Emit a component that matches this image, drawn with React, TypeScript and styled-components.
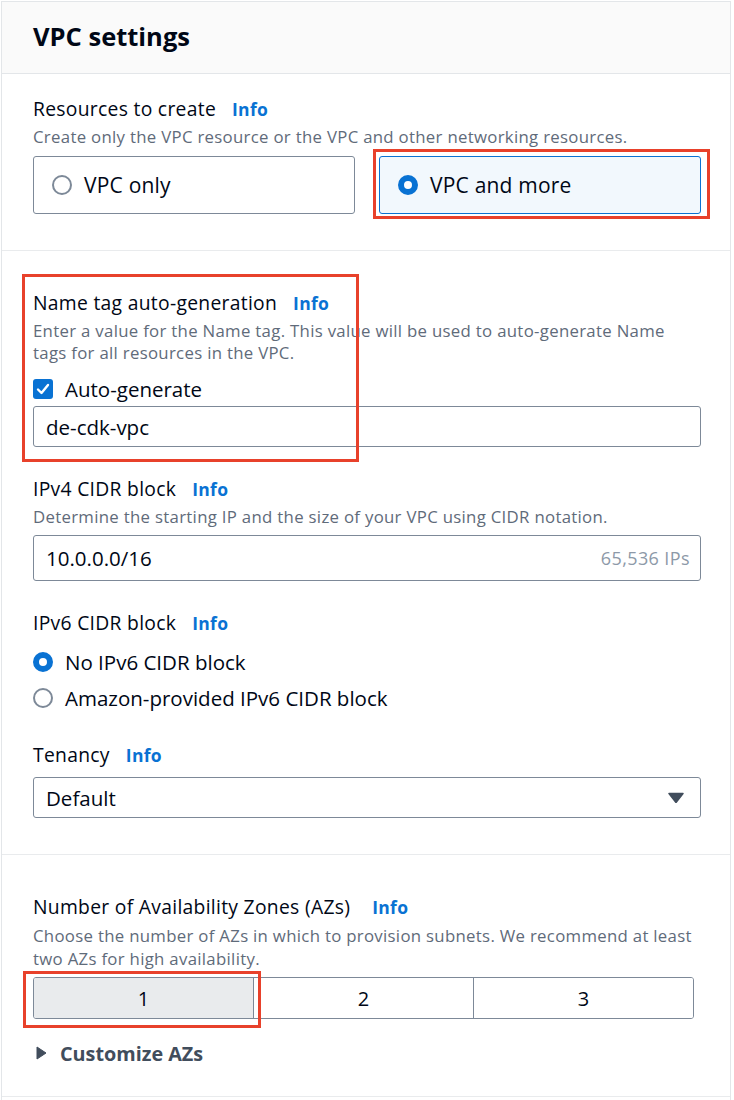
import React from "react";
import styled, { createGlobalStyle } from "styled-components";

const GlobalStyle = createGlobalStyle`
  html, body { margin: 0; padding: 0; background: #ffffff; }
  body { font-family: "Open Sans", "Liberation Sans", Arial, sans-serif; color: #000716; }
  * { box-sizing: border-box; }
`;

const Page = styled.div`
  position: relative;
  width: 734px;
  height: 1100px;
  overflow: hidden;
  padding: 1px 3px 0 1px;
`;

const Container = styled.div`
  border: 1px solid #e3e6e9;
  border-bottom: none;
  height: 1120px;
  background: #ffffff;
`;

const Header = styled.div`
  height: 72px;
  background: #fafafa;
  border-bottom: 1px solid #e3e6e9;
  padding: 0 0 4px 31px;
  display: flex;
  align-items: center;
`;

const Title = styled.h2`
  margin: 0;
  font-size: 25.5px;
  font-weight: 700;
  color: #000716;
`;

const Section = styled.div<{ $top: number; $bottom: number }>`
  padding: ${(p) => p.$top}px 29px ${(p) => p.$bottom}px 31px;
  border-bottom: 1px solid #e9ebed;
  display: flex;
  flex-direction: column;
`;

const LabelRow = styled.div<{ $mt?: number }>`
  display: flex;
  align-items: baseline;
  height: 24px;
  line-height: 24px;
  margin-top: ${(p) => p.$mt ?? 0}px;
  white-space: nowrap;
`;

const Label = styled.span`
  font-size: 19.3px;
  letter-spacing: 0.3px;
  color: #000716;
`;

const Info = styled.a<{ $gap?: number }>`
  margin-left: ${(p) => p.$gap ?? 16}px;
  font-size: 17.5px;
  font-weight: 700;
  letter-spacing: 0.3px;
  color: #0972d3;
  text-decoration: none;
`;

const Desc = styled.div<{ $mt?: number; $lh?: number }>`
  margin-top: ${(p) => p.$mt ?? 5}px;
  font-size: 16.8px;
  letter-spacing: 0.3px;
  line-height: ${(p) => p.$lh ?? 22}px;
  color: #5f6b7a;
  white-space: nowrap;
`;

const Tiles = styled.div`
  display: grid;
  grid-template-columns: 1fr 1fr;
  gap: 24px;
  margin-top: 8px;
`;

const Tile = styled.div<{ $selected?: boolean }>`
  height: 58px;
  border: 1px solid ${(p) => (p.$selected ? "#0972d3" : "#7d8998")};
  background: ${(p) => (p.$selected ? "#f2f8fd" : "#ffffff")};
  border-radius: 3px;
  display: flex;
  align-items: center;
  gap: 12px;
  padding-left: 18px;
  font-size: 21px;
  letter-spacing: 0.2px;
  color: #000716;
`;

const Radio = styled.span<{ $checked?: boolean }>`
  width: 20px;
  height: 20px;
  border-radius: 50%;
  flex: none;
  background: #ffffff;
  border: ${(p) => (p.$checked ? "6px solid #0972d3" : "2px solid #7d8998")};
`;

const OptionRow = styled.div<{ $mt: number }>`
  display: flex;
  align-items: center;
  gap: 12px;
  height: 24px;
  margin-top: ${(p) => p.$mt}px;
  font-size: 20.5px;
  color: #000716;
`;

const CheckBox = styled.span`
  width: 20px;
  height: 20px;
  border-radius: 3px;
  background: #0972d3;
  flex: none;
  display: flex;
  align-items: center;
  justify-content: center;
`;

const InputBox = styled.div<{ $h: number; $mt: number }>`
  height: ${(p) => p.$h}px;
  margin-top: ${(p) => p.$mt}px;
  border: 1px solid #7d8998;
  border-radius: 3px;
  background: #ffffff;
  display: flex;
  align-items: center;
  justify-content: space-between;
  padding: 0 14px 0 12px;
  font-size: 20.5px;
  color: #000716;
`;

const Hint = styled.span`
  font-size: 18px;
  letter-spacing: 0.4px;
  color: #8d99a8;
  margin-right: -4px;
`;

const Caret = styled.svg`
  width: 16px;
  height: 11px;
  margin-right: 2px;
`;

const Segmented = styled.div`
  width: 661px;
  height: 42px;
  margin-top: 7px;
  display: grid;
  grid-template-columns: 219px 1fr 1fr;
  border: 1px solid #7d8998;
  border-radius: 3px;
  overflow: hidden;
`;

const Segment = styled.div<{ $selected?: boolean }>`
  display: flex;
  align-items: center;
  justify-content: center;
  font-size: 20px;
  color: #000716;
  background: ${(p) => (p.$selected ? "#e9ebed" : "#ffffff")};
  & + & {
    border-left: 1px solid #7d8998;
  }
`;

const Expander = styled.div`
  display: flex;
  align-items: center;
  gap: 13px;
  height: 24px;
  margin-top: 22px;
  padding-left: 3px;
  font-size: 19.8px;
  font-weight: 700;
  color: #414d5c;
`;

const Highlight = styled.div<{ $x: number; $y: number; $w: number; $h: number }>`
  position: absolute;
  left: ${(p) => p.$x}px;
  top: ${(p) => p.$y}px;
  width: ${(p) => p.$w}px;
  height: ${(p) => p.$h}px;
  border: 3px solid #e8412b;
  pointer-events: none;
`;

export default function App() {
  return (
    <>
      <GlobalStyle />
      <Page>
        <Container>
          <Header>
            <Title>VPC settings</Title>
          </Header>

          <Section $top={23} $bottom={36}>
            <LabelRow>
              <Label>Resources to create</Label>
              <Info>Info</Info>
            </LabelRow>
            <Desc $mt={5}>Create only the VPC resource or the VPC and other networking resources.</Desc>
            <Tiles>
              <Tile>
                <Radio />
                VPC only
              </Tile>
              <Tile $selected>
                <Radio $checked />
                VPC and more
              </Tile>
            </Tiles>
          </Section>

          <Section $top={40} $bottom={36}>
            <LabelRow>
              <Label>Name tag auto-generation</Label>
              <Info>Info</Info>
            </LabelRow>
            <Desc>
              Enter a value for the Name tag. This value will be used to auto-generate Name
              <br />
              tags for all resources in the VPC.
            </Desc>
            <OptionRow $mt={13}>
              <CheckBox>
                <svg width="14" height="12" viewBox="0 0 14 12">
                  <path d="M2 6.5 L5.5 10 L12 2" fill="none" stroke="#ffffff" strokeWidth="2.4" strokeLinecap="round" strokeLinejoin="round" />
                </svg>
              </CheckBox>
              Auto-generate
            </OptionRow>
            <InputBox $h={41} $mt={5}>de-cdk-vpc</InputBox>

            <LabelRow $mt={30}>
              <Label>IPv4 CIDR block</Label>
              <Info>Info</Info>
            </LabelRow>
            <Desc>Determine the starting IP and the size of your VPC using CIDR notation.</Desc>
            <InputBox $h={46} $mt={7}>
              <span>10.0.0.0/16</span>
              <Hint>65,536 IPs</Hint>
            </InputBox>

            <LabelRow $mt={30}>
              <Label>IPv6 CIDR block</Label>
              <Info>Info</Info>
            </LabelRow>
            <OptionRow $mt={15}>
              <Radio $checked />
              No IPv6 CIDR block
            </OptionRow>
            <OptionRow $mt={12}>
              <Radio />
              Amazon-provided IPv6 CIDR block
            </OptionRow>

            <LabelRow $mt={33}>
              <Label>Tenancy</Label>
              <Info>Info</Info>
            </LabelRow>
            <InputBox $h={41} $mt={10}>
              <span>Default</span>
              <Caret viewBox="0 0 16 11">
                <path d="M1 1.5 H15 L8 10.5 Z" fill="#414d5c" stroke="#414d5c" strokeWidth="1.5" strokeLinejoin="round" />
              </Caret>
            </InputBox>
          </Section>

          <Section $top={40} $bottom={31}>
            <LabelRow>
              <Label>Number of Availability Zones (AZs)</Label>
              <Info $gap={22}>Info</Info>
            </LabelRow>
            <Desc $mt={5} $lh={23}>
              Choose the number of AZs in which to provision subnets. We recommend at least
              <br />
              two AZs for high availability.
            </Desc>
            <Segmented>
              <Segment $selected>1</Segment>
              <Segment>2</Segment>
              <Segment>3</Segment>
            </Segmented>
            <Expander>
              <svg width="11" height="14" viewBox="0 0 11 14">
                <path d="M1 1 L10 7 L1 13 Z" fill="#414d5c" stroke="#414d5c" strokeWidth="1" strokeLinejoin="round" />
              </svg>
              Customize AZs
            </Expander>
          </Section>
        </Container>

        <Highlight $x={373} $y={149} $w={337} $h={70} />
        <Highlight $x={22} $y={274} $w={337} $h={188} />
        <Highlight $x={23} $y={971} $w={238} $h={57} />
      </Page>
    </>
  );
}
